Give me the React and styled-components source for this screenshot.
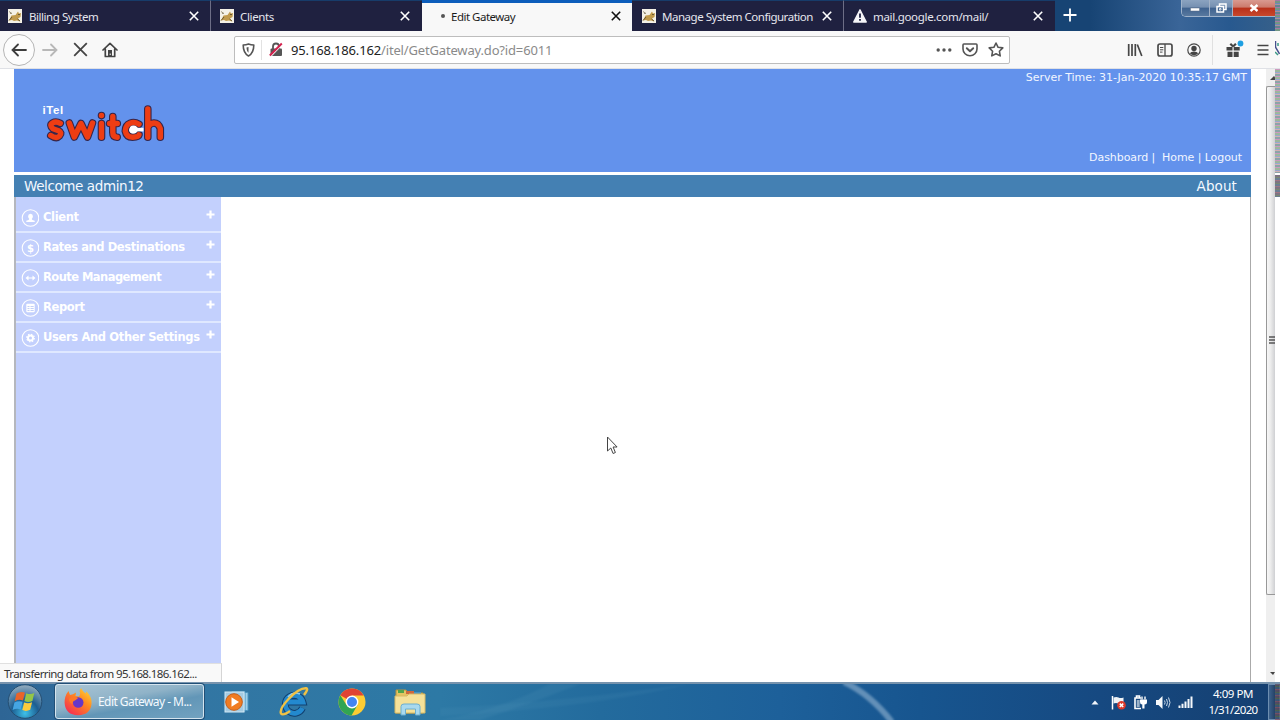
import React from 'react';
import styled, { createGlobalStyle } from 'styled-components';

const GlobalStyle = createGlobalStyle`
  * { box-sizing: border-box; }
  body {
    margin: 0;
    overflow: hidden;
    background: #fff;
    font-family: 'Noto Sans', 'Open Sans', sans-serif;
  }
  svg { display: block; flex: none; }
`;

const Screen = styled.div`
  position: relative;
  width: 1280px;
  height: 720px;
  overflow: hidden;
  display: flex;
  flex-direction: column;
`;

/* text whose tracking is tuned per label */
const Label = styled.span`
  white-space: pre;
  font-size: ${p => p.$size || 12}px;
  letter-spacing: ${p => p.$track || 0}px;
`;

/* tab strip */
const TabStrip = styled.div`
  display: flex;
  height: 31px;
  flex: none;
  background: linear-gradient(90deg, #174474 0, #174474 1090px, #3a6598 1180px, #28598f 1230px, #376089 1280px);
`;

const Tab = styled.div`
  display: flex;
  align-items: center;
  width: ${p => p.$width || 211}px;
  height: 31px;
  padding: 0 ${p => p.$right || 11}px 0 ${p => p.$left || 8}px;
  color: ${p => (p.$active ? '#1c1c1c' : '#e6e6ee')};
  background: ${p => (p.$active ? '#f8f8f8' : '#1f2140')};
  border-top: ${p => (p.$active ? '3px solid #0c5dbb' : '1px solid #173c6a')};
  border-right: ${p => (p.$line ? '1px solid #6d6e86' : '0')};
  padding-bottom: ${p => (p.$active ? 2 : 0)}px;

  .close {
    margin-left: auto;
  }
`;

const Favicon = styled.span`
  display: flex;
  width: 14px;
  margin-right: ${p => p.$gap || 6}px;
`;

const Dot = styled.span`
  width: 4px;
  height: 4px;
  border-radius: 50%;
  background: #555;
  margin-right: 6px;
`;

const NewTab = styled.div`
  display: flex;
  padding: 8px 0 0 8px;
  flex: 1;
`;

const WindowButtons = styled.div`
  display: flex;
  width: 94px;
  height: 17px;
  margin-right: 5px;
  border: 1px solid #9fb3cb;
  border-top: 0;
  border-right: 0;
  border-radius: 0 0 0 5px;
  overflow: hidden;
`;

const WindowButton = styled.div`
  display: flex;
  justify-content: center;
  align-items: center;
  width: ${p => p.$width}px;
  border-right: ${p => (p.$close ? '0' : '1px solid #a3b2c6')};
  background: ${p => (p.$close
    ? 'linear-gradient(#d99a90 0, #cc7a6c 45%, #b8301a 50%, #c8482c 100%)'
    : 'linear-gradient(#8ba3c0 0, #7690b1 45%, #3f628f 50%, #58799f 100%)')};
`;

/* toolbar */
const Toolbar = styled.div`
  display: flex;
  align-items: center;
  height: 38px;
  flex: none;
  padding-left: 3px;
  background: #f8f8f8;
  border-bottom: 1px solid #dfe1e6;
`;

const BackButton = styled.div`
  display: flex;
  align-items: center;
  justify-content: center;
  width: 32px;
  height: 32px;
  border: 1px solid #b5b5b5;
  border-radius: 50%;
  background: #fcfcfc;
`;

const NavButtons = styled.div`
  display: flex;
  align-items: center;
  gap: 14.5px;
  width: 199px;
  padding-left: 7px;
`;

const UrlBar = styled.div`
  display: flex;
  align-items: center;
  width: 776px;
  height: 28px;
  padding: 0 5px 0 7px;
  background: #fff;
  border: 1px solid #bdbdbd;
  border-radius: 2px;
`;

const UrlDivider = styled.span`
  width: 1px;
  height: 20px;
  margin: 0 7px 0 6px;
  background: #e2e2e2;
`;

const Url = styled.div`
  flex: 1;
  margin-left: 8px;
  font-size: 13px;
  line-height: 18px;
  letter-spacing: -0.16px;
  color: #8a8a8a;
  white-space: nowrap;

  b {
    color: #222;
    font-weight: 400;
  }
`;

const UrlActions = styled.div`
  display: flex;
  align-items: center;
  gap: 10px;
`;

const ToolbarRight = styled.div`
  display: flex;
  align-items: center;
  margin-left: 117px;
  gap: 14px;
`;

const ToolDivider = styled.span`
  width: 1px;
  height: 30px;
  margin: 0 -1px 0 -3px;
  background: #e0e0e0;
`;

/* page */
const Viewport = styled.div`
  display: flex;
  height: 613px;
  flex: none;
  background: #fff;
`;

const Page = styled.div`
  display: flex;
  flex-direction: column;
  width: 1237px;
  margin-left: 14px;
  font-family: 'DejaVu Sans', Verdana, sans-serif;
`;

const Banner = styled.div`
  display: flex;
  justify-content: space-between;
  height: 103px;
  color: #f2f6ff;
  background: #6392ec;
`;

const BannerRight = styled.div`
  display: flex;
  flex-direction: column;
  justify-content: space-between;
  align-items: flex-end;
  padding: 2px 4px 7px 0;
  line-height: 14px;
`;

const Links = styled.div`
  display: flex;
  margin-right: 5px;
`;

const WelcomeBar = styled.div`
  display: flex;
  align-items: center;
  justify-content: space-between;
  height: 22px;
  margin-top: 3px;
  padding: 0 14px 0 10px;
  color: #f4f9ff;
  background: #4480b3;
`;

const Body = styled.div`
  display: flex;
  flex: 1;
  border-left: 2px solid #b5b7bd;
  border-right: 1px solid #aaa;
`;

const Sidebar = styled.div`
  width: 205px;
  background: #c3d0fd;
`;

const MenuItem = styled.div`
  display: flex;
  align-items: center;
  height: 30px;
  padding: 2px 5px 0 5px;
  border-bottom: 2px solid #dfe8ff;
  color: #fff;
  font-weight: 700;

  &:first-child {
    height: 36px;
    padding-top: 8px;
  }

  .text {
    margin: -2px 0 0 4px;
  }

  .plus {
    margin: -8px 1px 0 auto;
  }
`;

const Scrollbar = styled.div`
  display: flex;
  flex-direction: column;
  width: 9px;
  margin-left: 15px;
  background: #efefef;
`;

const ScrollArrow = styled.div`
  display: flex;
  justify-content: flex-end;
  align-items: center;
  height: 17px;
`;

const Thumb = styled.div`
  display: flex;
  align-items: center;
  justify-content: flex-end;
  height: 509px;
  padding-bottom: 2px;
  border: 1px solid #989898;
  border-right: 0;
  border-radius: 2px 0 0 2px;
  background: linear-gradient(90deg, #f7f7f7, #ececec 45%, #cfd0d3);
`;

const StatusPopup = styled.div`
  position: absolute;
  left: 0;
  top: 663px;
  width: 222px;
  height: 19px;
  padding-left: 4px;
  line-height: 19px;
  color: #333;
  background: #f9f9f9;
  border-top: 1px solid #e0e0e0;
  border-right: 1px solid #d5d5d5;
`;

const Cursor = styled.div`
  position: absolute;
  left: 606px;
  top: 436px;
`;

/* garbled column along the edge of the display */
const EdgeNoise = styled.div`
  position: absolute;
  right: 0;
  top: ${p => p.$top}px;
  width: 5px;
  height: ${p => p.$height}px;
  opacity: 0.8;
  background: ${p => (p.$dark
    ? 'repeating-linear-gradient(#5d5264 0 2px, #556b4c 2px 3px, #455d78 3px 5px, #8b5265 5px 6px)'
    : 'repeating-linear-gradient(#c07fae 0 1px, #83a583 1px 3px, #7e91c4 3px 4px, #c79ba0 4px 5px, #6e8e92 5px 7px)')};
`;

const EdgeSpeck = styled.div`
  position: absolute;
  right: 0;
  top: 41px;
`;

/* taskbar */
const Taskbar = styled.div`
  position: relative;
  display: flex;
  align-items: center;
  flex: none;
  height: 38px;
  border-top: 2px solid #7793ad;
  background: linear-gradient(90deg, #2e6595 0, #3276a3 200px, #2d79a5 440px, #236b9d 600px, #1d609a 780px, #17558f 920px, #164981 1100px, #153f70 1280px);
`;

const Streaks = styled.svg`
  position: absolute;
  left: 440px;
  top: 0;

  path {
    filter: blur(1px);
  }
`;

const TaskButton = styled.div`
  display: flex;
  align-items: center;
  width: 149px;
  height: 35px;
  margin: -1px 0 0 12px;
  padding-left: 8px;
  gap: 6px;
  color: #f4faff;
  border: 1px solid #d5e4ee;
  border-radius: 3px;
  box-shadow: 0 0 0 1px #214f76;
  background: linear-gradient(170deg, #a9c5d5 0, #90b3c8 40%, #6296b7 62%, #72a2c0 100%);
`;

const Pinned = styled.div`
  display: flex;
  align-items: center;
  margin-left: 20px;
  gap: 28px;
`;

const Tray = styled.div`
  display: flex;
  align-items: center;
  margin-left: auto;
  gap: 7px;
`;

const Clock = styled.div`
  display: flex;
  flex-direction: column;
  align-items: center;
  width: 54px;
  margin: 0 8px 0 6px;
  line-height: 16px;
  color: #fff;
`;

const ShowDesktop = styled.div`
  width: 12px;
  height: 36px;
  margin-left: -7px;
  border: 1px solid #6d8eb0;
  background: linear-gradient(90deg, #3d628c, #142c4e);
`;

const TomcatIcon = () => (
  <svg width="14" height="14" viewBox="0 0 14 14">
    <rect width="14" height="14" fill="#f4f1e6" />
    <path d="M1 11.5l2.500-5L7.500 6 10 2.500l1 2 2-.5-.5 4-2.500 1.500 2.500 3-3.500-1-3 .5-2-1z" fill="#c19b4c" />
    <path d="M1 11.500l3-3.500M10 5.500h2M9.500 10l2.500 2" stroke="#6b5a32" strokeWidth="1" fill="none" />
    <path d="M1 2.500l3 2M2 4.500h2" stroke="#9f967c" />
  </svg>
);

const WarnIcon = () => (
  <svg width="14" height="14" viewBox="0 0 14 14">
    <path d="M7 .8L13.3 13H.7z" fill="#f5f5f8" stroke="#f5f5f8" strokeWidth="1.3" strokeLinejoin="round" />
    <path d="M7 4.5v4.2M7 10v1.8" stroke="#1f2140" strokeWidth="1.8" />
  </svg>
);

const CloseIcon = ({ color, size = 10, width = 1.6 }) => (
  <svg className="close" width={size} height={size} viewBox="0 0 10 10">
    <path d="M.8.8l8.4 8.4M9.2.8L.8 9.2" stroke={color} strokeWidth={width} />
  </svg>
);

const ArrowIcon = ({ color, flip }) => (
  <svg width="16" height="14" viewBox="0 0 16 14">
    <path
      d="M7 1.5L1.5 7 7 12.5M1.5 7H15"
      fill="none"
      stroke={color}
      strokeWidth="1.8"
      strokeLinecap="round"
      transform={flip ? 'matrix(-1 0 0 1 16 0)' : undefined}
    />
  </svg>
);

const HomeIcon = () => (
  <svg width="16" height="16" viewBox="0 0 16 16">
    <path d="M1 8l7-6.6L15 8M3.3 7v7.5h9.4V7" fill="none" stroke="#444" strokeWidth="1.7" strokeLinejoin="round" strokeLinecap="round" />
    <path d="M6 8h4v7H6z" fill="#444" />
    <path d="M8.200 11.500v1.500" stroke="#f8f8f8" />
  </svg>
);

const ShieldIcon = () => (
  <svg width="13" height="14" viewBox="0 0 13 14">
    <path d="M6.5 1C4.8 1.6 3 1.9 1.2 2c0 4.700.8 8.500 5.300 11C11 10.500 11.800 6.700 11.800 2 10 1.900 8.200 1.600 6.500 1z" fill="none" stroke="#555" strokeWidth="1.6" strokeLinejoin="round" />
    <path d="M6.500 4c-.8.2-1.400.3-2 .4.1 2.300.6 4 2 5.400z" fill="#555" />
  </svg>
);

const LockIcon = () => (
  <svg width="14" height="15" viewBox="0 0 14 15">
    <path d="M4 7V4.500a3 3 0 016 0V7" fill="none" stroke="#565656" strokeWidth="1.800" />
    <rect x="1.500" y="6.500" width="11.500" height="7.500" rx="1" fill="#565656" />
    <path d="M1.600 14.600L13.200 2.600" stroke="#fff" strokeWidth="1.200" />
    <path d="M.8 13.500L12.800 1.500" stroke="#d3224f" strokeWidth="1.900" />
  </svg>
);

const DotsIcon = () => (
  <svg width="16" height="4" viewBox="0 0 16 4" fill="#555">
    <circle cx="2.200" cy="2" r="1.700" />
    <circle cx="8" cy="2" r="1.700" />
    <circle cx="13.800" cy="2" r="1.700" />
  </svg>
);

const PocketIcon = () => (
  <svg width="16" height="14" viewBox="0 0 16 14" fill="none" stroke="#555" strokeWidth="1.600" strokeLinejoin="round" strokeLinecap="round">
    <path d="M1.900 1h12.200q.9 0 .9.9V6a7 6.700 0 01-14 0V1.900Q1 1 1.900 1z" />
    <path d="M4.800 5.200L8 8.300l3.200-3.100" strokeWidth="1.900" />
  </svg>
);

const StarIcon = () => (
  <svg width="16" height="15" viewBox="0 0 16 15">
    <path d="M8 1l2.100 4.300 4.700.6-3.400 3.300.8 4.700L8 11.700l-4.200 2.200.8-4.700L1.200 5.900l4.700-.6z" fill="none" stroke="#555" strokeWidth="1.600" strokeLinejoin="round" />
  </svg>
);

const LibraryIcon = () => (
  <svg width="16" height="14" viewBox="0 0 16 14" stroke="#474747" strokeWidth="1.700">
    <path d="M1.700 1v12M5 1v12M8.300 1v12M10.300 1.500L14.800 13" />
  </svg>
);

const SidebarIcon = () => (
  <svg width="16" height="14" viewBox="0 0 16 14" fill="none" stroke="#4a4a4a">
    <rect x="1" y="1" width="14" height="12" rx="2" strokeWidth="1.700" />
    <path d="M8 1v12" strokeWidth="1.300" />
    <path d="M3 4.500h3.300M3 6.800h3.300M3 9.100h2.500" />
  </svg>
);

const AccountIcon = () => (
  <svg width="14" height="14" viewBox="0 0 14 14">
    <circle cx="7" cy="7" r="6.200" fill="none" stroke="#4a4a4a" strokeWidth="1.200" />
    <circle cx="7" cy="5.500" r="2.700" fill="#444" />
    <path d="M2.800 10.300Q4 8.600 7 8.600t4.200 1.700Q9.500 12.200 7 12.200T2.800 10.300z" fill="#444" />
  </svg>
);

const GiftIcon = () => (
  <svg width="18" height="18" viewBox="0 0 18 18" style={{ marginTop: -2 }}>
    <path d="M.5 7h6v3.500h-6zM7.700 7h6v3.500h-6zM1.500 11.700h5V17h-5zM7.700 11.700h5V17h-5z" fill="#444" />
    <path d="M7.100 6.500L4.300 3.800M7.100 6.500l2.800-2.700" stroke="#444" strokeWidth="2.200" fill="none" />
    <circle cx="14.500" cy="3.500" r="2.900" fill="#1e9fe2" />
  </svg>
);

const MenuIcon = () => (
  <svg width="12" height="12" viewBox="0 0 12 12" stroke="#444" strokeWidth="1.700" style={{ marginLeft: -1 }}>
    <path d="M.5 1.500h11M.5 6h11M.5 10.500h11" />
  </svg>
);

const Logo = () => (
  <svg width="170" height="103" viewBox="0 0 170 103">
    <text x="28.500" y="45" fill="#fff" fontFamily="Liberation Sans, sans-serif" fontWeight="700" fontSize="11.500" letterSpacing=".55">iTel</text>
    <circle cx="119.500" cy="60.500" r="7" fill="#fff" />
    <g fill="none" strokeLinecap="round" strokeLinejoin="round">
      {[['#35264c', 7.6], ['#ee3d13', 5.4]].map(([color, w]) => (
        <g key={color} stroke={color} strokeWidth={w}>
          <path d="M46.300 54.300Q42 52 38.500 54T39 59.800L44.500 61.700Q48.500 63.800 45.500 67T36.800 66.500" />
          <path d="M55.300 54l5 14L67 54.500 73.500 68l5-14" />
          <path d="M87.500 54.500v13.700M87.500 46.500v.1" />
          <path d="M98.800 47.500v16Q98.800 68 103.200 68.200M95.600 54.500h7.700" />
          <path d="M125 55.200Q120.500 52.500 116 54.200T111.300 62Q112.500 68.200 118.500 68.200T125 65.800" />
          <path d="M133.800 40v28.200M133.800 58.500Q135.500 54 140 54T146.300 59.500v8.700" />
        </g>
      ))}
    </g>
    <path d="M119 58.800h10.500v3.600H119z" fill="#fff" />
    <circle cx="119.500" cy="60.500" r="4" fill="#fff" />
  </svg>
);

const glyphs = {
  user: <path d="M9 4.800q2.400 0 2.400 2.500 0 1.500-1.200 2.700 0 1 3 1.800V13H4.800v-1.200q3-.8 3-1.800-1.200-1.200-1.200-2.700Q6.600 4.800 9 4.800z" />,
  dollar: <text x="9" y="12.800" textAnchor="middle" fontSize="10" fontWeight="700">$</text>,
  route: <path d="M4 9l3-2.500v2h4v-2L14 9l-3 2.500v-2H7v2z" />,
  report: (
    <g>
      <rect x="4.800" y="4.800" width="8.400" height="8.400" rx="1" />
      <path d="M6 7.500h2M9 7.500h3.200M6 9.500h2M9 9.500h3.200M6 11.500h2M9 11.500h3.200" stroke="#b4c4f5" strokeWidth=".8" />
    </g>
  ),
  gear: (
    <g>
      <circle cx="9" cy="9" r="2.500" fill="none" stroke="#fff" strokeWidth="2" />
      <circle cx="9" cy="9" r="3.800" fill="none" stroke="#fff" strokeWidth="1.200" strokeDasharray="1.500 1.480" />
    </g>
  ),
};

const MenuGlyph = ({ name }) => (
  <svg width="18" height="18" viewBox="-.5 0 18 18" fill="#fff">
    <circle cx="9" cy="9" r="8.300" fill="none" stroke="#fff" strokeWidth="1.100" />
    {glyphs[name]}
  </svg>
);

const PlusIcon = () => (
  <svg className="plus" width="9" height="9" viewBox="0 0 9 9">
    <path d="M4.500.5v8M.5 4.500h8" stroke="#fff" strokeWidth="2.200" />
  </svg>
);

const StartOrb = () => (
  <svg width="36" height="36" viewBox="0 0 36 36" style={{ marginLeft: 7 }}>
    <defs>
      <radialGradient id="orb" cx="50%" cy="85%" r="80%">
        <stop offset="0" stopColor="#3ec0e8" />
        <stop offset=".5" stopColor="#1c5d91" />
        <stop offset="1" stopColor="#8aa6bb" />
      </radialGradient>
    </defs>
    <circle cx="18" cy="17.500" r="16.800" fill="url(#orb)" stroke="#244e72" />
    <path d="M9.500 9.500q4-2.700 8.400-.9l-1.900 7.900q-4.200-1.700-8.300.7z" fill="#ea6429" />
    <path d="M19.300 9.200q4 1.800 8-.2l-1.900 7.900q-4 2-8 .2z" fill="#94c647" />
    <path d="M7.400 18.500q4.100-2.300 8.200-.7l-1.900 7.600q-4-1.700-8.100.5z" fill="#45a5e3" />
    <path d="M17.100 18.400q4 1.600 8-.2l-1.900 7.600q-4 2-7.900.3z" fill="#fccb3c" />
  </svg>
);

const FirefoxIcon = () => (
  <svg width="28" height="29" viewBox="0 0 28 29">
    <defs>
      <linearGradient id="fox" x1="1" y1="0" x2=".2" y2="1">
        <stop offset="0" stopColor="#ffe23f" />
        <stop offset=".45" stopColor="#ff8a1f" />
        <stop offset="1" stopColor="#f42b55" />
      </linearGradient>
    </defs>
    <path d="M17 1q2 4 4.500 5.500l1-2Q28 10 27.600 16 27 28 14 28.200 1.500 28 .6 16 .4 9 4.500 4l1.500 4 3-.8 3-1.700-.5 3.500 3.500.5q2-3 .5-5.500z" fill="url(#fox)" />
    <circle cx="14.200" cy="15.500" r="5.300" fill="#6637c8" />
    <path d="M5 12q4-4 9-.8l-3 2.300q-3 1-2.500 3.500Q5 16 5 12z" fill="#ff7a27" />
  </svg>
);

const PlayerIcon = () => (
  <svg width="26" height="24" viewBox="0 0 26 24">
    <path d="M8 1.500h13v20H8zM11 2.500h13v18H11z" fill="#9fd0ea" stroke="#4b94bf" />
    <rect x="1" y="2" width="19" height="20" fill="#a4cbe2" stroke="#d3e9f5" />
    <circle cx="10" cy="12" r="8.300" fill="#f07c22" stroke="#c95e16" />
    <path d="M7.500 7.200l7.500 4.800-7.500 4.800z" fill="#fff" />
  </svg>
);

const IeIcon = () => (
  <svg width="32" height="30" viewBox="0 0 32 30">
    <path d="M24.500 21A9 9 0 1125 15H10" fill="none" stroke="#12406f" strokeWidth="6.800" />
    <path d="M24.500 21A9 9 0 1125 15H10" fill="none" stroke="#2389cf" strokeWidth="4.800" />
    <path d="M10 10q5-6 12-3" fill="none" stroke="#8ccdf0" strokeWidth="1.600" />
    <path d="M26 8Q31 1.500 28 1.300 21 1 11 11.500 1 22 3 26.500 5 29 12 24" fill="none" stroke="#efc145" strokeWidth="2.400" />
  </svg>
);

const ChromeIcon = () => (
  <svg width="28" height="28" viewBox="0 0 28 28">
    <circle cx="14" cy="14" r="13.500" fill="#fdcc33" />
    <path d="M14 14L2.300 7.250A13.500 13.500 0 0125.700 7.500H14z" fill="#e04333" />
    <path d="M2.300 7.250A13.500 13.500 0 0013.500 27.500L19.500 17 14 14 8.500 17z" fill="#31a552" />
    <circle cx="14" cy="14" r="6.400" fill="#fff" />
    <circle cx="14" cy="14" r="5" fill="#4385f2" />
  </svg>
);

const ExplorerIcon = () => (
  <svg width="32" height="28" viewBox="0 0 32 28">
    <path d="M2 2h10l2 3h15v20H2z" fill="#e5c462" stroke="#b4923d" />
    <path d="M4 2h6v3H4z" fill="#51a44b" />
    <path d="M12 3h8v3h-8z" fill="#ce673d" />
    <path d="M20 4h7v3h-7z" fill="#4794c4" />
    <path d="M1 8h12l2-2h16v19H1z" fill="#f5e199" stroke="#d7b965" />
    <path d="M7 27V18.500q0-2.500 3-2.500h13q3 0 3 2.500V27h-4.500v-6h-10v6z" fill="#a9d9ef" stroke="#6baed1" />
  </svg>
);

const TrayIcons = () => (
  <React.Fragment>
    <svg width="8" height="5" viewBox="0 0 8 5" style={{ marginRight: 5 }}><path d="M4 .5L7.500 4.500h-7z" fill="#f1f5fa" /></svg>
    <svg width="15" height="15" viewBox="0 0 15 15">
      <path d="M1.500 1v13.500" stroke="#fff" strokeWidth="1.500" />
      <path d="M2.500 2.500q3-1 5 0t5 0v6q-2.500 1-5 0t-5 0z" fill="#f0f3f6" />
      <circle cx="10.500" cy="10.300" r="4.300" fill="#dc3a2c" />
      <path d="M8.800 8.600l3.400 3.400M12.200 8.600l-3.400 3.400" stroke="#fff" strokeWidth="1.500" />
    </svg>
    <svg width="15" height="15" viewBox="0 0 15 15">
      <path d="M3.500 3V1h3v2M8 3H2v10.500h6" fill="none" stroke="#fff" strokeWidth="1.600" />
      <path d="M3.700 5h3v7h-3z" fill="#9bb2c8" />
      <path d="M7 4.500h7V7q0 2.500-2.500 2.500v4H9.300v-4Q7 9.500 7 7z" fill="#fff" />
      <path d="M9 1.500v3M12 1.500v3" stroke="#fff" strokeWidth="1.400" />
    </svg>
    <svg width="16" height="15" viewBox="0 0 16 15">
      <path d="M1 5h2.500L7.500 1v13l-4-4H1z" fill="#f7f9fb" />
      <path d="M9.500 5.500q1.200 2 0 4M11.500 4q2 3.500 0 7M13.500 2.500q3 5 0 10" fill="none" stroke="#c9d8e8" />
    </svg>
    <svg width="15" height="12" viewBox="0 0 15 12" fill="#f5f8fb">
      <path d="M.5 9.500h2V12h-2zM3.500 7.800h2V12h-2zM6.500 5.500h2V12h-2zM9.500 3h2v9h-2zM12.500.5h2V12h-2z" />
    </svg>
  </React.Fragment>
);

const menu = [
  { icon: 'user', text: 'Client', track: -0.37 },
  { icon: 'dollar', text: 'Rates and Destinations', track: -0.42 },
  { icon: 'route', text: 'Route Management', track: -0.55 },
  { icon: 'report', text: 'Report', track: -0.37 },
  { icon: 'gear', text: 'Users And Other Settings', track: -0.35 },
];

const App = function App() {
  return (
    <Screen>
      <GlobalStyle />
      <TabStrip>
        <Tab $line $width={211}>
          <Favicon $gap={7}><TomcatIcon /></Favicon>
          <Label $size={11.5} $track={-0.45}>Billing System</Label>
          <CloseIcon color="#fff" />
        </Tab>
        <Tab $left={9} $right={12}>
          <Favicon><TomcatIcon /></Favicon>
          <Label $size={11.5} $track={-0.35}>Clients</Label>
          <CloseIcon color="#fff" />
        </Tab>
        <Tab $active $left={19} $width={210}>
          <Dot />
          <Label $size={11.5} $track={-0.5}>Edit Gateway</Label>
          <CloseIcon color="#111" />
        </Tab>
        <Tab $line $width={212} $left={10}>
          <Favicon><TomcatIcon /></Favicon>
          <Label $size={11.5} $track={-0.47}>Manage System Configuration</Label>
          <CloseIcon color="#fff" />
        </Tab>
        <Tab $left={9} $right={12}>
          <Favicon><WarnIcon /></Favicon>
          <Label $size={11.5} $track={-0.31}>mail.google.com/mail/</Label>
          <CloseIcon color="#fff" />
        </Tab>
        <NewTab>
          <svg width="14" height="14" viewBox="0 0 14 14"><path d="M7 .5v13M.5 7h13" stroke="#fff" strokeWidth="1.800" /></svg>
        </NewTab>
        <WindowButtons>
          <WindowButton $width={28}>
            <svg width="10" height="5" viewBox="0 0 10 5" style={{ marginTop: 3 }}><path d="M.5 1h9v3h-9z" fill="#fff" stroke="#596b80" strokeWidth=".5" /></svg>
          </WindowButton>
          <WindowButton $width={24}>
            <svg width="11" height="10" viewBox="0 0 11 10" fill="none" stroke="#fff" strokeWidth="1.500"><path d="M3.500 3V1h6.500v5.500H8M1 3.500h6.500V9H1z" /><path d="M3.500 5.500H5V7H3.500z" strokeWidth=".8" /></svg>
          </WindowButton>
          <WindowButton $close $width={42}><svg width="10" height="8" viewBox="0 0 10 8"><path d="M1.500 1l7 6M8.500 1l-7 6" stroke="#fff" strokeWidth="2.400" /></svg></WindowButton>
        </WindowButtons>
      </TabStrip>

      <Toolbar>
        <BackButton><ArrowIcon color="#3d3d3d" /></BackButton>
        <NavButtons>
          <ArrowIcon color="#b8b8b8" flip />
          <CloseIcon color="#444" size={15} width={1.2} />
          <HomeIcon />
        </NavButtons>
        <UrlBar>
          <ShieldIcon />
          <UrlDivider />
          <LockIcon />
          <Url><b>95.168.186.162</b>/itel/GetGateway.do?id=6011</Url>
          <UrlActions>
            <DotsIcon />
            <PocketIcon />
            <StarIcon />
          </UrlActions>
        </UrlBar>
        <ToolbarRight>
          <LibraryIcon />
          <SidebarIcon />
          <AccountIcon />
          <ToolDivider />
          <GiftIcon />
          <MenuIcon />
        </ToolbarRight>
      </Toolbar>

      <Viewport>
        <Page>
          <Banner>
            <Logo />
            <BannerRight>
              <Label $size={11} $track={-0.03}>Server Time: 31-Jan-2020 10:35:17 GMT</Label>
              <Links>
                <Label $size={11} $track={-0.07}>{'Dashboard |  Home | Logout'}</Label>
              </Links>
            </BannerRight>
          </Banner>
          <WelcomeBar>
            <Label $size={13.5} $track={-0.4}>Welcome admin12</Label>
            <Label $size={13.5} $track={0.1}>About</Label>
          </WelcomeBar>
          <Body>
            <Sidebar>
              {menu.map(item => (
                <MenuItem key={item.icon}>
                  <MenuGlyph name={item.icon} />
                  <Label className="text" $size={11.5} $track={item.track}>{item.text}</Label>
                  <PlusIcon />
                </MenuItem>
              ))}
            </Sidebar>
          </Body>
        </Page>
        <Scrollbar>
          <ScrollArrow><svg width="5" height="4" viewBox="0 0 5 4"><path d="M4 0l3 4H0z" fill="#444" /></svg></ScrollArrow>
          <Thumb>
            <svg width="6" height="8" viewBox="0 0 6 8"><path d="M0 1h6M0 4h6M0 7h6" stroke="#555" strokeWidth="1.300" /></svg>
          </Thumb>
          <ScrollArrow style={{ marginTop: 'auto' }}><svg width="5" height="4" viewBox="0 0 5 4"><path d="M0 0h5L3 3z" fill="#444" /></svg></ScrollArrow>
        </Scrollbar>
      </Viewport>

      <Taskbar>
        <Streaks width="500" height="36" viewBox="0 0 500 36">
          <path d="M0 36Q60 26 110 0h30Q90 20 40 36z" fill="#5b9bbd" opacity=".15" />
          <path d="M0 24Q100 20 250 0Q150 24 0 32z" fill="#5b9bbd" opacity=".12" />
          <path d="M404-2Q430 10 452 38" fill="none" stroke="#8aadcc" strokeWidth="6" opacity=".65" />
        </Streaks>
        <StartOrb />
        <TaskButton>
          <FirefoxIcon />
          <Label $size={12} $track={-0.55}>Edit Gateway - M...</Label>
        </TaskButton>
        <Pinned>
          <PlayerIcon />
          <IeIcon />
          <ChromeIcon />
          <ExplorerIcon />
        </Pinned>
        <Tray>
          <TrayIcons />
          <Clock>
            <Label $size={11.5} $track={-0.45}>4:09 PM</Label>
            <Label $size={11.5} $track={-0.6}>1/31/2020</Label>
          </Clock>
          <ShowDesktop />
        </Tray>
      </Taskbar>

      <StatusPopup><Label as="div" $size={11.5} $track={-0.6}>Transferring data from 95.168.186.162...</Label></StatusPopup>
      <Cursor>
        <svg width="12" height="19" viewBox="0 0 12 19"><path d="M1.500 1v14l3.300-3 2.300 5.500 2.300-1L7.100 11h4z" fill="#fff" stroke="#444" /></svg>
      </Cursor>
      <EdgeNoise $top={0} $height={31} />
      <EdgeSpeck>
        <svg width="5" height="15" viewBox="0 0 5 15"><path d="M.5 0v6l4 7" fill="none" stroke="#46508c" strokeWidth="1.500" /><path d="M0 11l3 3M3 2v3" stroke="#3c9a86" strokeWidth="1.500" /></svg>
      </EdgeSpeck>
      <EdgeNoise $top={69} $height={104} />
      <EdgeNoise $dark $top={175} $height={22} />
      <EdgeNoise $dark $top={684} $height={36} />
    </Screen>
  );
};

export default App;
